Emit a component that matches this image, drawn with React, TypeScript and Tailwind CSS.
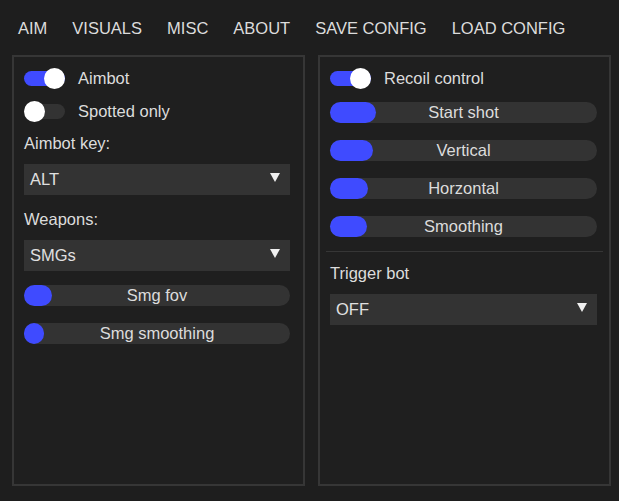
import { ReactNode } from "react";

const tabs = ["AIM", "VISUALS", "MISC", "ABOUT", "SAVE CONFIG", "LOAD CONFIG"];

const Toggle = ({ on, label }: { on: boolean; label: string }) => (
  <div className="flex h-[33px] items-center gap-[13px]">
    <div className="relative flex h-[21px] w-[41px] items-center">
      <div className={`h-[15px] w-full rounded-full ${on ? "bg-[#3f4bff]" : "bg-[#333333]"}`} />
      <div
        className={`absolute top-0 h-[21px] w-[21px] rounded-full bg-white ${on ? "right-0" : "left-0"}`}
      />
    </div>
    <span className="text-[16.5px] text-[#dcdcdc]">{label}</span>
  </div>
);

const Slider = ({ fill, label }: { fill: number; label: string }) => (
  <div className="relative flex h-[21px] items-center justify-center rounded-full bg-[#333333]">
    <div className="absolute left-0 top-0 h-full rounded-full bg-[#3f4bff]" style={{ width: fill }} />
    <span className="relative text-[16.5px] text-[#dcdcdc]">{label}</span>
  </div>
);

const Select = ({ value }: { value: string }) => (
  <div className="flex h-[31px] items-center justify-between bg-[#333333] pl-[6px] pr-[10px]">
    <span className="text-[16.5px] text-[#e0e0e0]">{value}</span>
    <svg width="10" height="9" viewBox="0 0 10 9" className="-mt-[4px]">
      <path d="M0 0H10L5 9Z" fill="#f0f0f0" />
    </svg>
  </div>
);

const Panel = ({ children }: { children: ReactNode }) => (
  <div className="flex w-[293px] flex-col border-2 border-[#363636] bg-[#1f1f1f] px-[10px] pt-[5px]">
    {children}
  </div>
);

export default function App() {
  return (
    <div
      className="flex h-[501px] w-[619px] flex-col bg-[#1e1e1e] pl-[12px] pb-[15px]"
      style={{ fontFamily: '"Liberation Sans", Arial, sans-serif' }}
    >
      <div className="flex h-[55px] items-center gap-[25px] pl-[6px] pt-[1px] text-[16.5px] text-[#dcdcdc]">
        {tabs.map((t) => (
          <span key={t}>{t}</span>
        ))}
      </div>
      <div className="flex flex-1 gap-[13px]">
        <Panel>
          <Toggle on label="Aimbot" />
          <Toggle on={false} label="Spotted only" />
          <div className="mt-[3px] mr-[3px] text-[16.5px] text-[#dcdcdc]">Aimbot key:</div>
          <div className="mt-[8px] mr-[3px]">
            <Select value="ALT" />
          </div>
          <div className="mt-[12px] text-[16.5px] text-[#dcdcdc]">Weapons:</div>
          <div className="mt-[8px] mr-[3px]">
            <Select value="SMGs" />
          </div>
          <div className="mt-[14px] mr-[3px] flex flex-col gap-[17px]">
            <Slider fill={28} label="Smg fov" />
            <Slider fill={20} label="Smg smoothing" />
          </div>
        </Panel>
        <Panel>
          <Toggle on label="Recoil control" />
          <div className="mt-[7px] mr-[2px] flex flex-col gap-[17px]">
            <Slider fill={46} label="Start shot" />
            <Slider fill={43} label="Vertical" />
            <Slider fill={38} label="Horzontal" />
            <Slider fill={37} label="Smoothing" />
          </div>
          <div className="-mx-[4px] mt-[14px] h-px bg-[#363636]" />
          <div className="mt-[9px] text-[16.5px] text-[#dcdcdc]">Trigger bot</div>
          <div className="mt-[8px] mr-[2px]">
            <Select value="OFF" />
          </div>
        </Panel>
      </div>
    </div>
  );
}
